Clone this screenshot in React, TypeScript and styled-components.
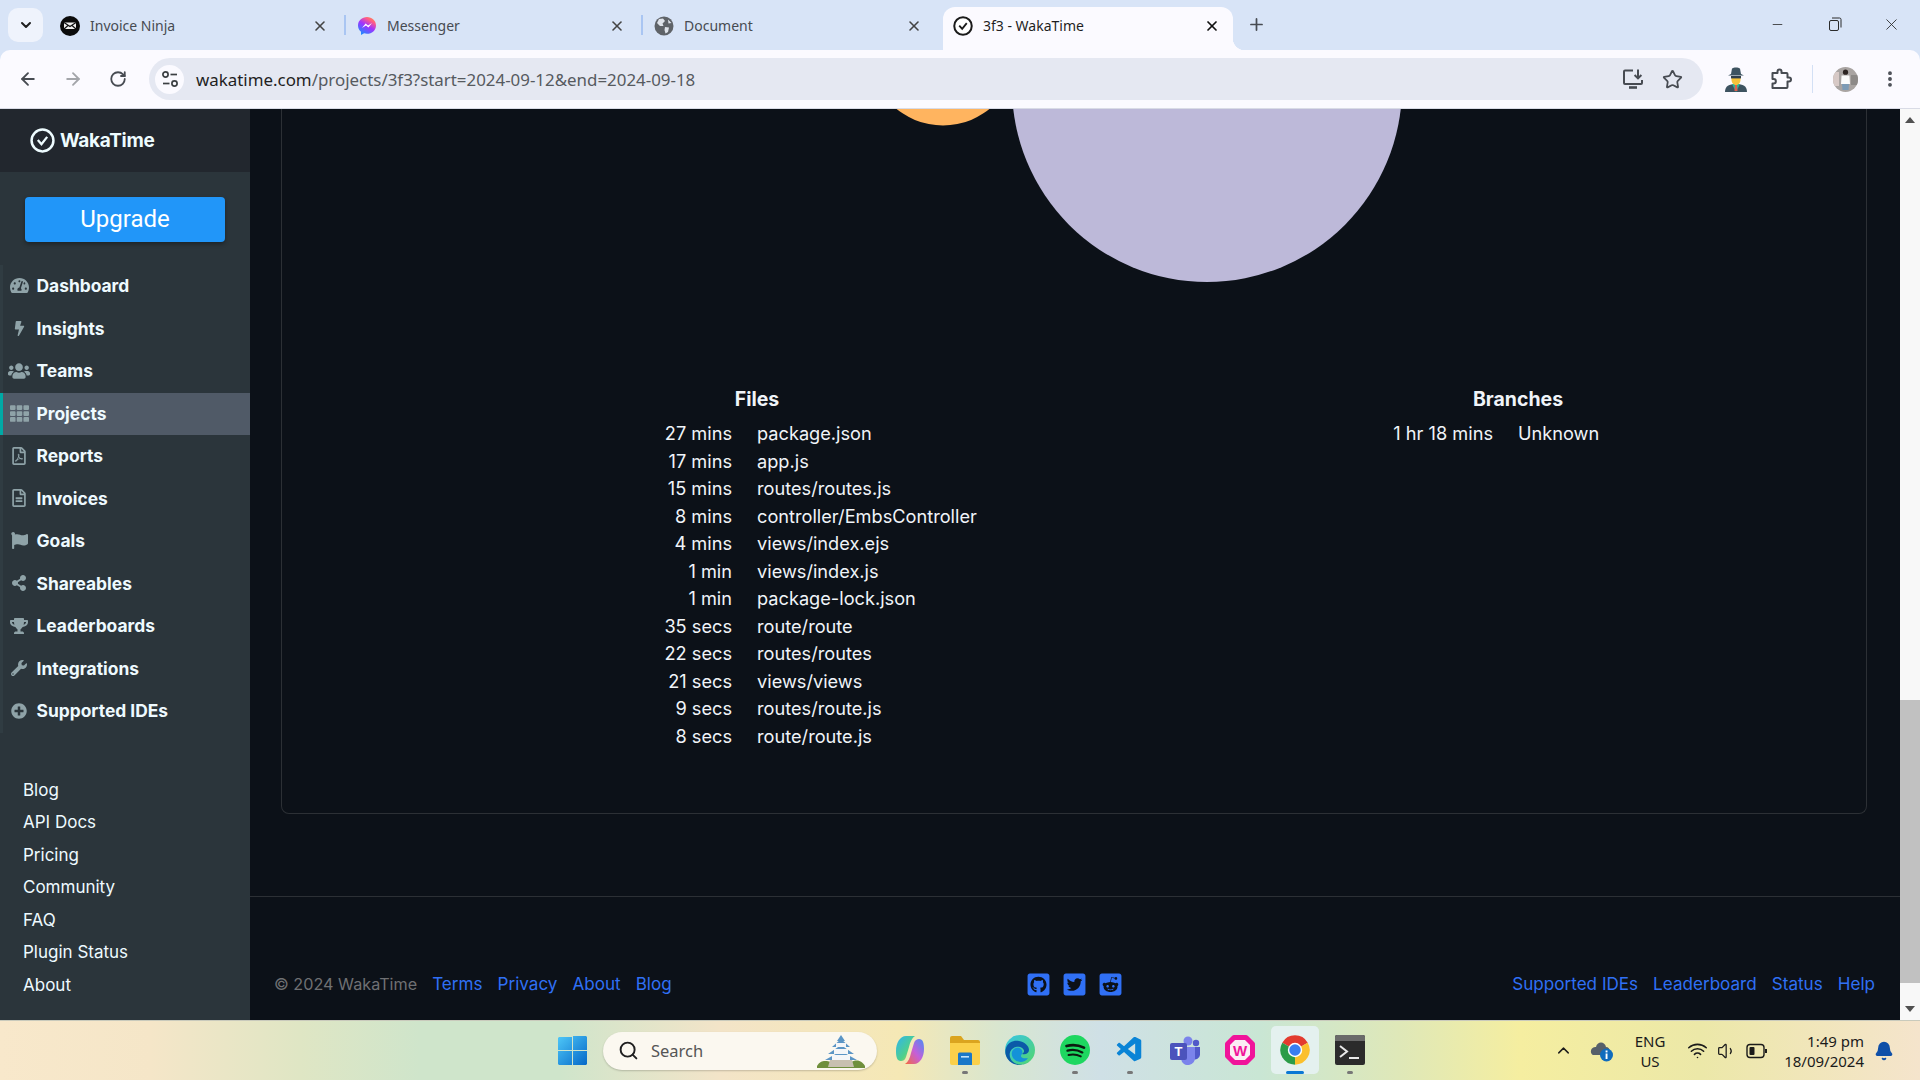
import React from "react";
import styled, { createGlobalStyle } from "styled-components";
import {
  ArrowLeft, ArrowRight, RotateCw, Star, X, Plus, Minus, EllipsisVertical,
  ChevronDown, ChevronUp, Search, Wifi, Volume1, Bell,
} from "lucide-react";
import {
  FaTachometerAlt, FaBolt, FaUsers, FaTh, FaRegFilePdf, FaRegFileAlt, FaFlag, FaShareAlt,
  FaTrophy, FaWrench, FaPlusCircle, FaGithubSquare, FaTwitterSquare, FaRedditSquare,
} from "react-icons/fa";
import { VscVscode } from "react-icons/vsc";

const GlobalStyle = createGlobalStyle`
  html, body, #root { margin: 0; height: 100%; }
  body { overflow: hidden; background: #0c1118; font-family: "Inter", "Liberation Sans", sans-serif; }
`;

const navItems = [
  { label: "Dashboard", icon: <FaTachometerAlt size={19} /> },
  { label: "Insights", icon: <FaBolt size={15} /> },
  { label: "Teams", icon: <FaUsers size={22} /> },
  { label: "Projects", icon: <FaTh size={19} />, active: true },
  { label: "Reports", icon: <FaRegFilePdf size={18} /> },
  { label: "Invoices", icon: <FaRegFileAlt size={18} /> },
  { label: "Goals", icon: <FaFlag size={17} /> },
  { label: "Shareables", icon: <FaShareAlt size={16} /> },
  { label: "Leaderboards", icon: <FaTrophy size={18} /> },
  { label: "Integrations", icon: <FaWrench size={16} /> },
  { label: "Supported IDEs", icon: <FaPlusCircle size={16} /> },
];

const extraLinks = ["Blog", "API Docs", "Pricing", "Community", "FAQ", "Plugin Status", "About"];

const files = [
  ["27 mins", "package.json"],
  ["17 mins", "app.js"],
  ["15 mins", "routes/routes.js"],
  ["8 mins", "controller/EmbsController"],
  ["4 mins", "views/index.ejs"],
  ["1 min", "views/index.js"],
  ["1 min", "package-lock.json"],
  ["35 secs", "route/route"],
  ["22 secs", "routes/routes"],
  ["21 secs", "views/views"],
  ["9 secs", "routes/route.js"],
  ["8 secs", "route/route.js"],
];

const branches = [["1 hr 18 mins", "Unknown"]];

function NinjaIcon() {
  return (
    <svg width="20" height="20" viewBox="0 0 20 20">
      <circle cx="10" cy="10" r="10" fill="#0b0b0b" />
      <path d="M4 6.5 L16 6.5 L16 13 L4 13 Z" fill="#f1f1f1" />
      <path d="M4 6.5 L10 10.5 L16 6.5 M4 13 L8 9.5 M16 13 L12 9.5" stroke="#111" strokeWidth="1.2" fill="none" />
    </svg>
  );
}

function MessengerIcon() {
  return (
    <svg width="20" height="20" viewBox="0 0 20 20">
      <defs>
        <linearGradient id="msg" x1="0.2" y1="1" x2="0.8" y2="0">
          <stop offset="0" stopColor="#1292ff" />
          <stop offset="0.5" stopColor="#a033ff" />
          <stop offset="0.8" stopColor="#ff5c87" />
          <stop offset="1" stopColor="#ff8a4c" />
        </linearGradient>
      </defs>
      <path d="M10 1 C5 1 1 4.6 1 9.4 C1 12 2.1 14.2 4 15.7 L4 19 L7.1 17.3 C8 17.6 9 17.7 10 17.7 C15 17.7 19 14.1 19 9.4 C19 4.6 15 1 10 1 Z" fill="url(#msg)" />
      <path d="M5 12 L8.6 7.6 L11 9.6 L15 7 L11.4 11.4 L9 9.4 Z" fill="#fff" />
    </svg>
  );
}

function GlobeIcon() {
  return (
    <svg width="20" height="20" viewBox="0 0 20 20">
      <circle cx="10" cy="10" r="9.5" fill="#5f6368" />
      <path d="M5 3 L9 2.5 L11 5 L8.5 7.5 L9.5 10 L6 10 L3 7 Z M11 11 L15 11.5 L14 16 L11.5 17.5 L10.5 14 Z M14 3.5 L17.5 7 L14.5 7.5 Z" fill="#dfe3ea" />
    </svg>
  );
}

function WakaIcon({ size, stroke, bg }: { size: number; stroke: string; bg: string }) {
  return (
    <svg width={size} height={size} viewBox="0 0 24 24">
      <circle cx="12" cy="12" r="10.5" fill={bg} stroke={stroke} strokeWidth="2.4" />
      <path d="M7.5 11.5 L11 15.5 L16.5 8.5" fill="none" stroke={stroke} strokeWidth="2.2" />
    </svg>
  );
}

function SpyIcon() {
  return (
    <svg width="24" height="26" viewBox="0 0 24 26">
      <path d="M1 26 C1 20 5 18 12 18 C19 18 23 20 23 26 Z" fill="#3d5360" />
      <path d="M8 18 L12 26 L16 18 Z" fill="#28b89a" />
      <path d="M11 19 H13 L13.5 25 H10.5 Z" fill="#e0604f" />
      <path d="M7.5 10 H16.5 V14 C16.5 17 14 19 12 19 C10 19 7.5 17 7.5 14 Z" fill="#f5c33b" />
      <path d="M8 2.5 C9.5 1 14.5 1 16 2.5 L17 8 L20 9.5 L4 9.5 L7 8 Z" fill="#3d5360" />
      <rect x="7" y="10" width="10" height="2.4" fill="#2f3e4a" />
    </svg>
  );
}

function AvatarIcon() {
  return (
    <svg width="25" height="25" viewBox="0 0 25 25">
      <defs>
        <clipPath id="avatarClip"><circle cx="12.5" cy="12.5" r="12.5" /></clipPath>
      </defs>
      <g clipPath="url(#avatarClip)">
        <rect width="25" height="25" fill="#a9a4a2" />
        <rect x="0" y="5" width="6" height="14" fill="#d7c9c6" />
        <rect x="18" y="8" width="7" height="10" fill="#8d8a88" />
        <path d="M8.5 8.5 H16.5 L17 17 H8 Z" fill="#fbfbfb" />
        <circle cx="12.5" cy="5.2" r="2.6" fill="#2c2422" />
        <path d="M9 17 H16 L15.5 23 H9.5 Z" fill="#7d9bb5" />
      </g>
    </svg>
  );
}

function InstallIcon() {
  return (
    <svg width="22" height="22" viewBox="0 0 22 22" fill="none" stroke="#474b52" strokeWidth="2">
      <path d="M11 2.5 H3 A1 1 0 0 0 2 3.5 V15 A1 1 0 0 0 3 16 H19 A1 1 0 0 0 20 15 V12" />
      <path d="M16 1.5 V10 M12.6 7 L16 10.4 L19.4 7" />
      <path d="M7 19.5 H15" strokeWidth="2.6" />
    </svg>
  );
}

function ExtensionIcon() {
  return (
    <svg width="22" height="24" viewBox="0 0 22 24" fill="none" stroke="#474b52" strokeWidth="2" strokeLinejoin="round">
      <path d="M2.5 6 H7.5 V4.5 A2 2 0 0 1 11.5 4.5 V6 H16.5 A1 1 0 0 1 17.5 7 V10.5 H19 A2 2 0 0 1 19 14.5 H17.5 V20 A1 1 0 0 1 16.5 21 H2.5 V16.5 H3.6 A2.2 2.2 0 0 0 3.6 12 H2.5 Z" />
    </svg>
  );
}

function SiteSettingsIcon() {
  return (
    <svg width="18" height="18" viewBox="0 0 18 18" fill="none" stroke="#3c4043" strokeWidth="1.7">
      <circle cx="4.5" cy="4.5" r="2.6" />
      <path d="M9.5 4.5 H16" />
      <circle cx="13.5" cy="13.5" r="2.6" />
      <path d="M2 13.5 H8.5" />
    </svg>
  );
}

function RestoreIcon() {
  return (
    <svg width="14" height="14" viewBox="0 0 14 14" fill="none" stroke="#2b2b2b" strokeWidth="1">
      <rect x="1.5" y="3.5" width="9" height="10" rx="1.5" />
      <path d="M4 1 H11.5 A1.5 1.5 0 0 1 13 2.5 V10.5" />
    </svg>
  );
}

function WindowsLogo() {
  return (
    <svg width="29" height="29" viewBox="0 0 29 29">
      <defs>
        <linearGradient id="win" x1="0" y1="0" x2="1" y2="1">
          <stop offset="0" stopColor="#4fc8f8" />
          <stop offset="1" stopColor="#0568c8" />
        </linearGradient>
      </defs>
      <path d="M1 1 H14 V14 H0 V2 Z M15 0 H28 L29 1 V14 H15 Z M0 15 H14 V29 H1 L0 28 Z M15 15 H29 V28 L28 29 H15 Z" fill="url(#win)" />
    </svg>
  );
}

function CastleIcon() {
  return (
    <svg width="48" height="34" viewBox="0 0 48 34">
      <path d="M0 32 C4 25 10 27 14 28 L34 28 C38 26 44 25 48 32 L48 34 L0 34 Z" fill="#6f8f3c" />
      <path d="M13 26 H35 L37 33 H11 Z" fill="#c8c0b0" />
      <path d="M24 1 L28 7 H20 Z M24 5 L33 13 H15 Z M24 11 L37 20 H11 Z M24 17 L40 26 H8 Z" fill="#5b95c5" />
      <path d="M19 9 H29 V13 H19 Z M17 15 H31 V20 H17 Z M15 21 H33 V26 H15 Z" fill="#f4f6f8" />
    </svg>
  );
}

function CopilotIcon() {
  return (
    <svg width="30" height="30" viewBox="0 0 30 30">
      <defs>
        <linearGradient id="coA" x1="0" y1="0" x2="1" y2="1">
          <stop offset="0" stopColor="#2fb4f0" />
          <stop offset="0.6" stopColor="#4fd08a" />
          <stop offset="1" stopColor="#f6d23c" />
        </linearGradient>
        <linearGradient id="coB" x1="1" y1="0" x2="0" y2="1">
          <stop offset="0" stopColor="#4a8cf5" />
          <stop offset="0.5" stopColor="#c55fd8" />
          <stop offset="1" stopColor="#f56a3c" />
        </linearGradient>
      </defs>
      <path d="M11 1 H20 C17 3 15 7 14 12 L11 22 C10 25 8 26 6 26 C2 26 1 22 1 16 C1 8 5 1 11 1 Z" fill="url(#coA)" />
      <path d="M19 29 H10 C13 27 15 23 16 18 L19 8 C20 5 22 4 24 4 C28 4 29 8 29 14 C29 22 25 29 19 29 Z" fill="url(#coB)" />
    </svg>
  );
}

function ExplorerIcon() {
  return (
    <svg width="30" height="30" viewBox="0 0 30 30">
      <path d="M0 3 A2 2 0 0 1 2 1 H11 L14 5 H28 A2 2 0 0 1 30 7 V12 H0 Z" fill="#dba41f" />
      <path d="M0 8 H30 V28 A2 2 0 0 1 28 30 H2 A2 2 0 0 1 0 28 Z" fill="#fbd04a" />
      <path d="M8 19 A1.5 1.5 0 0 1 9.5 17.5 H20.5 A1.5 1.5 0 0 1 22 19 V30 H8 Z" fill="#1a78c8" />
      <rect x="11" y="21" width="8" height="1.6" fill="#bfe2fb" />
    </svg>
  );
}

function EdgeIcon() {
  return (
    <svg width="30" height="30" viewBox="0 0 30 30">
      <defs>
        <linearGradient id="edgeA" x1="0" y1="0" x2="1" y2="1">
          <stop offset="0" stopColor="#36c4e8" />
          <stop offset="1" stopColor="#52d66a" />
        </linearGradient>
      </defs>
      <circle cx="15" cy="15" r="15" fill="url(#edgeA)" />
      <path d="M1 13 C3 7 9 5 14 6 C20 7 24 11 24 15 C24 18 21 20 17 19 C22 16 17 11 11 12 C6 13 2 19 7 26 C10 29 16 31 22 28 C16 31 7 31 2 23 C0 19 0 16 1 13 Z" fill="#0b5aa8" />
      <path d="M9 14 C13 11 19 14 17 19 C14 22 18 24 23 23 C20 28 12 28 9 24 C6 21 6 16 9 14 Z" fill="#1492d8" />
    </svg>
  );
}

function SpotifyIcon() {
  return (
    <svg width="30" height="30" viewBox="0 0 30 30" fill="none" stroke="#0c1a10" strokeLinecap="round">
      <circle cx="15" cy="15" r="15" fill="#1ed760" stroke="none" />
      <path d="M6.5 11 C12 9.5 18.5 10 24 12.6" strokeWidth="2.7" />
      <path d="M7.5 15.6 C12 14.4 17.8 15 22.3 17.4" strokeWidth="2.3" />
      <path d="M8.5 20 C12.5 19 17 19.4 20.8 21.4" strokeWidth="1.9" />
    </svg>
  );
}

function TeamsIcon() {
  return (
    <svg width="30" height="30" viewBox="0 0 30 30">
      <circle cx="18" cy="6" r="4.5" fill="#7b83eb" />
      <circle cx="26" cy="8" r="3.2" fill="#5059c9" />
      <path d="M21 12 H30 V20 A5 5 0 0 1 23 24 Z" fill="#5059c9" />
      <path d="M9 12 H25 V22 A7 7 0 0 1 11 24 Z" fill="#7b83eb" />
      <rect x="0" y="8" width="17" height="17" rx="2" fill="#4b53bc" />
      <text x="8.5" y="21" textAnchor="middle" fontFamily="Liberation Sans" fontWeight="700" fontSize="13" fill="#fff">T</text>
    </svg>
  );
}

function WampIcon() {
  return (
    <svg width="30" height="30" viewBox="0 0 30 30">
      <path d="M9 2.5 H21 L27.5 9 V21 L21 27.5 H9 L2.5 21 V9 Z" fill="#fbeef4" stroke="#f0149a" strokeWidth="5" strokeLinejoin="round" />
      <text x="15" y="20.5" textAnchor="middle" fontFamily="Liberation Sans" fontWeight="700" fontSize="15" fill="#f0149a">W</text>
    </svg>
  );
}

function ChromeIcon({ size }: { size: number }) {
  return (
    <svg width={size} height={size} viewBox="0 0 24 24">
      <path d="M12 12 L2.47 6.5 A11 11 0 0 1 21.53 6.5 Z" fill="#e33b2e" />
      <path d="M12 12 L12 23 A11 11 0 0 1 2.47 6.5 Z" fill="#2b9c47" />
      <path d="M12 12 L21.53 6.5 A11 11 0 0 1 12 23 Z" fill="#fbc02d" />
      <circle cx="12" cy="12" r="5.4" fill="#fff" />
      <circle cx="12" cy="12" r="4.3" fill="#3b7ef0" />
    </svg>
  );
}

function TerminalIcon() {
  return (
    <svg width="30" height="30" viewBox="0 0 30 30">
      <rect width="30" height="30" rx="2" fill="#2b2b2b" />
      <path d="M0 2 A2 2 0 0 1 2 0 H28 A2 2 0 0 1 30 2 V6 H0 Z" fill="#6a6a6a" />
      <path d="M5 11 L12 16.5 L5 22" fill="none" stroke="#e8e8e8" strokeWidth="2" />
      <path d="M14 23 H24" stroke="#e8e8e8" strokeWidth="2" />
    </svg>
  );
}

function OneDriveIcon() {
  return (
    <svg width="24" height="22" viewBox="0 0 24 22">
      <path d="M3 15 C-1 13 1 6 6 7 C7 1 15 1 16 7 C20 7 21 12 18 15 Z" fill="#56606a" />
      <circle cx="16.5" cy="15" r="6.5" fill="#0f6cbd" />
      <rect x="15.6" y="13.5" width="1.9" height="5.5" fill="#fff" />
      <rect x="15.6" y="10.5" width="1.9" height="1.9" fill="#fff" />
    </svg>
  );
}

function BatteryIcon() {
  return (
    <svg width="22" height="16" viewBox="0 0 22 16" fill="none" stroke="#1b1b1b" strokeWidth="1.4">
      <rect x="1" y="1.5" width="17" height="13" rx="3" />
      <rect x="3.5" y="4" width="5" height="8" rx="1" fill="#1b1b1b" stroke="none" />
      <path d="M20 6 V10" strokeWidth="2" />
    </svg>
  );
}

function StatColumn({ title, rows }: { title: string; rows: string[][] }) {
  return (
    <Column>
      <ColumnTitle>{title}</ColumnTitle>
      {rows.map(([time, name]) => (
        <StatRow key={name}>
          <StatTime>{time}</StatTime>
          <span>{name}</span>
        </StatRow>
      ))}
    </Column>
  );
}

export default function App() {
  return (
    <>
      <GlobalStyle />
      <Screen>
        <TabStrip>
          <TabListButton><ChevronDown size={16} strokeWidth={3} /></TabListButton>
          <Tab>
            <TabFav><NinjaIcon /></TabFav>
            <TabTitle>Invoice Ninja</TabTitle>
            <TabClose><X size={16} strokeWidth={2.4} /></TabClose>
          </Tab>
          <TabDivider />
          <Tab>
            <TabFav><MessengerIcon /></TabFav>
            <TabTitle>Messenger</TabTitle>
            <TabClose><X size={16} strokeWidth={2.4} /></TabClose>
          </Tab>
          <TabDivider />
          <Tab>
            <TabFav><GlobeIcon /></TabFav>
            <TabTitle>Document</TabTitle>
            <TabClose><X size={16} strokeWidth={2.4} /></TabClose>
          </Tab>
          <ActiveTab>
            <TabFav><WakaIcon size={20} stroke="#1b1b1b" bg="#fff" /></TabFav>
            <TabTitle $active>3f3 - WakaTime</TabTitle>
            <TabClose><X size={16} strokeWidth={2.6} color="#111" /></TabClose>
          </ActiveTab>
          <NewTab><Plus size={19} strokeWidth={2.2} /></NewTab>
          <WindowControls>
            <WindowButton><Minus size={15} strokeWidth={1.3} /></WindowButton>
            <WindowButton><RestoreIcon /></WindowButton>
            <WindowButton><X size={19} strokeWidth={1.1} /></WindowButton>
          </WindowControls>
        </TabStrip>

        <Toolbar>
          <NavButton><ArrowLeft size={20} strokeWidth={2.2} /></NavButton>
          <NavButton $disabled><ArrowRight size={20} strokeWidth={2.2} /></NavButton>
          <NavButton><RotateCw size={18} strokeWidth={2.4} /></NavButton>
          <Omnibox>
            <SiteChip><SiteSettingsIcon /></SiteChip>
            <Url>wakatime.com<UrlRest>/projects/3f3?start=2024-09-12&amp;end=2024-09-18</UrlRest></Url>
            <OmniActions>
              <InstallIcon />
              <Star size={21} strokeWidth={2} color="#474b52" />
            </OmniActions>
          </Omnibox>
          <ToolbarRight>
            <SpyIcon />
            <ExtensionIcon />
            <ToolbarDivider />
            <AvatarIcon />
            <EllipsisVertical size={20} strokeWidth={2.6} color="#474b52" />
          </ToolbarRight>
        </Toolbar>

        <Body>
          <Sidebar>
            <LogoBar>
              <WakaIcon size={25} stroke="#eefcff" bg="none" />
              <LogoText>WakaTime</LogoText>
            </LogoBar>
            <UpgradeButton>Upgrade</UpgradeButton>
            <Nav>
              {navItems.map((item) => (
                <NavRow key={item.label} $active={item.active}>
                  <NavIcon>{item.icon}</NavIcon>
                  {item.label}
                </NavRow>
              ))}
            </Nav>
            <ExtraLinks>
              {extraLinks.map((link) => (
                <ExtraLink key={link}>{link}</ExtraLink>
              ))}
            </ExtraLinks>
          </Sidebar>

          <Main>
            <CardWrap>
              <Card>
                <Chart viewBox="0 0 1584 272">
                  <circle cx="661" cy="-57" r="73.5" fill="#ffb45f" />
                  <circle cx="925" cy="-22" r="195" fill="#bdb9d9" />
                </Chart>
                <Stats>
                  <StatColumn title="Files" rows={files} />
                  <StatColumn title="Branches" rows={branches} />
                </Stats>
              </Card>
            </CardWrap>
            <Footer>
              <FooterLinks>
                <Copyright>© 2024 WakaTime</Copyright>
                <FooterLink>Terms</FooterLink>
                <FooterLink>Privacy</FooterLink>
                <FooterLink>About</FooterLink>
                <FooterLink>Blog</FooterLink>
              </FooterLinks>
              <Socials>
                <FaGithubSquare />
                <FaTwitterSquare />
                <FaRedditSquare />
              </Socials>
              <FooterLinksRight>
                <FooterLink>Supported IDEs</FooterLink>
                <FooterLink>Leaderboard</FooterLink>
                <FooterLink>Status</FooterLink>
                <FooterLink>Help</FooterLink>
              </FooterLinksRight>
            </Footer>
          </Main>

          <Scrollbar>
            <ScrollArrow $up />
            <ScrollGap />
            <ScrollThumb />
            <ScrollEnd>
              <ScrollArrow />
            </ScrollEnd>
          </Scrollbar>
        </Body>

        <Taskbar>
          <StartLogo><WindowsLogo /></StartLogo>
          <SearchBox>
            <Search size={21} strokeWidth={2.2} color="#1f1f1f" />
            <SearchText>Search</SearchText>
            <CastleIcon />
          </SearchBox>
          <TaskApps>
            <TaskSlot><CopilotIcon /></TaskSlot>
            <TaskSlot $running><ExplorerIcon /></TaskSlot>
            <TaskSlot><EdgeIcon /></TaskSlot>
            <TaskSlot $running><SpotifyIcon /></TaskSlot>
            <TaskSlot $running><VscVscode size={30} color="#0a84d6" /></TaskSlot>
            <TaskSlot><TeamsIcon /></TaskSlot>
            <TaskSlot><WampIcon /></TaskSlot>
            <TaskSlot $focused><ChromeIcon size={32} /></TaskSlot>
            <TaskSlot $running><TerminalIcon /></TaskSlot>
          </TaskApps>
          <Tray>
            <ChevronUp size={19} strokeWidth={1.8} color="#1b1b1b" />
            <OneDriveSlot><OneDriveIcon /></OneDriveSlot>
            <Lang><span>ENG</span><span>US</span></Lang>
            <TrayGroup>
              <Wifi size={21} strokeWidth={1.8} color="#1b1b1b" />
              <Volume1 size={20} strokeWidth={1.5} color="#1b1b1b" />
              <BatteryIcon />
            </TrayGroup>
            <Clock><span>1:49 pm</span><span>18/09/2024</span></Clock>
            <Bell size={20} fill="#0f4fa8" color="#0f4fa8" />
          </Tray>
        </Taskbar>
      </Screen>
    </>
  );
}

const chromeFont = `"Noto Sans", "Open Sans", "Liberation Sans", sans-serif`;

const Screen = styled.div`
  width: 1920px;
  height: 1080px;
  display: flex;
  flex-direction: column;
  overflow: hidden;
  background: #d8e4f7;
`;

const TabStrip = styled.div`
  flex: 0 0 50px;
  display: flex;
  align-items: flex-end;
  padding-left: 8px;
  background: #d8e4f7;
  font-family: ${chromeFont};
`;

const TabListButton = styled.div`
  width: 35px;
  height: 34px;
  margin: 0 6px 8px 0;
  border-radius: 10px;
  background: #eff3fc;
  color: #1f1f1f;
  display: flex;
  align-items: center;
  justify-content: center;
`;

const Tab = styled.div`
  width: 295px;
  height: 43px;
  padding: 0 16px 6px 11px;
  box-sizing: border-box;
  display: flex;
  align-items: center;
  color: #444;
`;

const ActiveTab = styled(Tab)`
  position: relative;
  width: 290px;
  margin-left: 5px;
  padding: 0 13px 6px 10px;
  background: #fbfaff;
  border-radius: 12px 12px 0 0;

  &::after {
    content: "";
    position: absolute;
    right: -12px;
    bottom: 0;
    width: 12px;
    height: 12px;
    background: radial-gradient(circle at 100% 0, #d8e4f7 12px, #fbfaff 12.5px);
  }
`;

const TabFav = styled.span`
  display: flex;
  width: 20px;
  margin-right: 10px;
`;

const TabTitle = styled.span<{ $active?: boolean }>`
  flex: 1;
  font-size: 14px;
  color: ${(p) => (p.$active ? "#1f1f1f" : "#474b52")};
`;

const TabClose = styled.span`
  display: flex;
`;

const TabDivider = styled.div`
  width: 2px;
  height: 20px;
  margin: 0 0 15px;
  background: #a9c5f2;
`;

const NewTab = styled.div`
  margin: 0 0 16px 14px;
  color: #474b52;
  display: flex;
`;

const WindowControls = styled.div`
  margin-left: auto;
  height: 100%;
  display: flex;
  align-items: center;
  padding-bottom: 2px;
  box-sizing: border-box;
`;

const WindowButton = styled.div`
  width: 57px;
  display: flex;
  justify-content: center;
  color: #2b2b2b;
`;

const Toolbar = styled.div`
  flex: 0 0 59px;
  box-sizing: border-box;
  display: flex;
  align-items: center;
  padding-left: 5px;
  background: #fbfaff;
  border-bottom: 1px solid #d9dbe6;
  border-radius: 10px 10px 0 0;
  font-family: ${chromeFont};
`;

const NavButton = styled.div<{ $disabled?: boolean }>`
  width: 45px;
  display: flex;
  justify-content: center;
  color: ${(p) => (p.$disabled ? "#a3a5aa" : "#474b52")};
`;

const Omnibox = styled.div`
  width: 1554px;
  height: 42px;
  margin-left: 9px;
  padding: 0 20px 0 6px;
  box-sizing: border-box;
  border-radius: 21px;
  background: #e5e8f2;
  display: flex;
  align-items: center;
`;

const SiteChip = styled.div`
  width: 29px;
  height: 29px;
  margin-right: 12px;
  border-radius: 50%;
  background: #fbfaff;
  display: flex;
  align-items: center;
  justify-content: center;
`;

const Url = styled.div`
  flex: 1;
  font-size: 16.9px;
  color: #1f1f1f;
`;

const UrlRest = styled.span`
  color: #565a60;
`;

const OmniActions = styled.div`
  display: flex;
  align-items: center;
  gap: 18px;
`;

const ToolbarRight = styled.div`
  display: flex;
  align-items: center;
  margin-left: 21px;
  gap: 22px;
`;

const ToolbarDivider = styled.div`
  width: 1px;
  height: 28px;
  margin: 0 -2px;
  background: #d3e0f5;
`;

const Body = styled.div`
  flex: 1;
  min-height: 0;
  display: flex;
  background: #0c1118;
`;

const Sidebar = styled.aside`
  flex: 0 0 250px;
  background: #2b353b;
  color: #eefaff;
  display: flex;
  flex-direction: column;
`;

const LogoBar = styled.div`
  flex: 0 0 63px;
  padding-left: 30px;
  background: #22272e;
  display: flex;
  align-items: center;
  gap: 5px;
`;

const LogoText = styled.span`
  font-size: 19px;
  font-weight: 700;
  letter-spacing: -0.3px;
  color: #eefcff;
`;

const UpgradeButton = styled.div`
  width: 200px;
  height: 45px;
  margin: 25px 0 23px 25px;
  padding-bottom: 2px;
  box-sizing: border-box;
  border-radius: 4px;
  background: #2196f9;
  box-shadow: 0 2px 4px rgba(0, 0, 0, 0.35);
  color: #fff;
  font-family: "Roboto", sans-serif;
  font-size: 24px;
  display: flex;
  align-items: center;
  justify-content: center;
`;

const Nav = styled.nav`
  display: flex;
  flex-direction: column;
`;

const NavRow = styled.div<{ $active?: boolean }>`
  height: 42.5px;
  padding: 0 0 1px 7px;
  box-sizing: border-box;
  border-left: 3px solid ${(p) => (p.$active ? "#00a9a5" : "#303c42")};
  background: ${(p) => (p.$active ? "#505a67" : "transparent")};
  display: flex;
  align-items: center;
  font-size: 17.4px;
  font-weight: 700;
`;

const NavIcon = styled.span`
  width: 18px;
  margin-right: 8.5px;
  color: #8fa3a8;
  display: flex;
  justify-content: center;

  svg { flex-shrink: 0; }
`;

const ExtraLinks = styled.div`
  margin: 41px 0 0 23px;
  display: flex;
  flex-direction: column;
`;

const ExtraLink = styled.div`
  height: 32.5px;
  display: flex;
  align-items: center;
  font-size: 17px;
`;

const Main = styled.main`
  flex: 1;
  min-width: 0;
  display: flex;
  flex-direction: column;
`;

const CardWrap = styled.div`
  padding: 0 33px 0 31px;
`;

const Card = styled.section`
  height: 705px;
  box-sizing: border-box;
  border: 1px solid #2c3035;
  border-top: 0;
  border-radius: 0 0 8px 8px;
`;

const Chart = styled.svg`
  display: block;
  width: 1584px;
  height: 272px;
  overflow: hidden;
`;

const Stats = styled.div`
  display: flex;
  gap: 261px;
  padding-left: 225px;
  color: #f0f4f8;
  font-size: 18.2px;
`;

const Column = styled.div`
  width: 500px;
`;

const ColumnTitle = styled.div`
  height: 39px;
  line-height: 37px;
  text-align: center;
  font-size: 19.5px;
  font-weight: 700;
`;

const StatRow = styled.div`
  display: grid;
  grid-template-columns: 225px 250px;
  column-gap: 25px;
  line-height: 27.5px;
`;

const StatTime = styled.span`
  text-align: right;
`;

const Footer = styled.footer`
  margin-top: 82px;
  border-top: 1px solid #2c3035;
  padding: 73px 25px 0 24px;
  display: grid;
  grid-template-columns: 1fr auto 1fr;
  align-items: center;
  font-size: 17.1px;
  line-height: 28px;
`;

const FooterLinks = styled.div`
  display: flex;
  gap: 15px;
`;

const FooterLinksRight = styled(FooterLinks)`
  justify-content: flex-end;
`;

const Copyright = styled.span`
  color: #6f7073;
  font-size: 16.2px;
`;

const FooterLink = styled.span`
  color: #3070f5;
`;

const Socials = styled.div`
  display: flex;
  gap: 11px;
  font-size: 25px;
  color: #3070f5;
  svg { display: block; }
`;

const Scrollbar = styled.div`
  flex: 0 0 20px;
  background: #f8f8f8;
  display: flex;
  flex-direction: column;
  align-items: center;
`;

const ScrollArrow = styled.div<{ $up?: boolean }>`
  margin: ${(p) => (p.$up ? "8px 0 0" : "0 0 8px")};
  border-left: 5px solid transparent;
  border-right: 5px solid transparent;
  ${(p) => (p.$up ? "border-bottom: 6px solid #505050;" : "border-top: 6px solid #505050;")}
`;

const ScrollGap = styled.div`
  flex: 1;
`;

const ScrollThumb = styled.div`
  flex: 0 0 283px;
  width: 100%;
  background: #c1c1c1;
`;

const ScrollEnd = styled.div`
  flex: 0 0 37px;
  display: flex;
  align-items: flex-end;
`;

const Taskbar = styled.div`
  flex: 0 0 60px;
  box-sizing: border-box;
  border-top: 1px solid #c9cabc;
  padding-left: 558px;
  display: flex;
  align-items: center;
  background: linear-gradient(90deg, #f8e8cb 0, #f5e6c8 150px, #dfe6c4 300px, #cfe5cb 420px, #cfe5cb 560px, #f3e4c8 720px, #f5e8b5 900px, #d8e6d0 1000px, #cfe0e6 1100px, #c9e6d4 1260px, #dfe8b8 1400px, #f5eea0 1520px, #ece8a8 1700px, #f5e4cc 1920px);
  font-family: ${chromeFont};
  color: #1b1b1b;
`;

const StartLogo = styled.div`
  display: flex;
  margin-right: 16px;
`;

const SearchBox = styled.div`
  width: 274px;
  height: 38px;
  padding: 0 12px 0 15px;
  box-sizing: border-box;
  border-radius: 19px;
  background: #fbf8f0;
  box-shadow: 0 1px 2px rgba(0, 0, 0, 0.2);
  display: flex;
  align-items: center;
`;

const SearchText = styled.span`
  flex: 1;
  margin-left: 12px;
  font-size: 16.5px;
  color: #555;
`;

const TaskApps = styled.div`
  margin-left: 5px;
  height: 100%;
  display: flex;
`;

const TaskSlot = styled.div<{ $running?: boolean; $focused?: boolean }>`
  position: relative;
  width: 48px;
  height: 48px;
  margin: 5px 3.5px 0;
  box-sizing: border-box;
  border-radius: 5px;
  background: ${(p) => (p.$focused ? "#e4f1ef" : "transparent")};
  display: flex;
  align-items: center;
  justify-content: center;

  &::after {
    content: "";
    display: ${(p) => (p.$running || p.$focused ? "block" : "none")};
    position: absolute;
    bottom: 0;
    left: 50%;
    transform: translateX(-50%);
    width: ${(p) => (p.$focused ? "18px" : "6px")};
    height: 3px;
    border-radius: 2px;
    background: ${(p) => (p.$focused ? "#0a78d4" : "#777")};
  }
`;

const Tray = styled.div`
  margin-left: 177px;
  display: flex;
  align-items: center;
`;

const OneDriveSlot = styled.div`
  margin-left: 17px;
  display: flex;
`;

const Lang = styled.div`
  width: 40px;
  margin-left: 16px;
  display: flex;
  flex-direction: column;
  align-items: center;
  font-size: 15px;
  line-height: 20px;
`;

const TrayGroup = styled.div`
  margin-left: 17px;
  display: flex;
  align-items: center;
  gap: 9px;
`;

const Clock = styled.div`
  width: 84px;
  margin: 0 10px 0 12px;
  display: flex;
  flex-direction: column;
  align-items: flex-end;
  font-size: 15px;
  line-height: 20px;
`;
